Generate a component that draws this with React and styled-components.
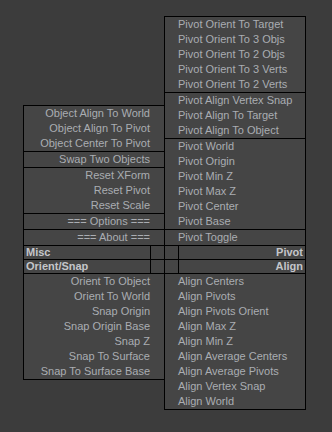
import React from 'react'
import styled, { createGlobalStyle } from 'styled-components'

const pivotOrient = ['Pivot Orient To Target', 'Pivot Orient To 3 Objs', 'Pivot Orient To 2 Objs', 'Pivot Orient To 3 Verts', 'Pivot Orient To 2 Verts']
const pivotAlign = ['Pivot Align Vertex Snap', 'Pivot Align To Target', 'Pivot Align To Object']
const pivotPlace = ['Pivot World', 'Pivot Origin', 'Pivot Min Z', 'Pivot Max Z', 'Pivot Center', 'Pivot Base']

const objectAlign = ['Object Align To World', 'Object Align To Pivot', 'Object Center To Pivot']
const resets = ['Reset XForm', 'Reset Pivot', 'Reset Scale']

const orientSnap = ['Orient To Object', 'Orient To World', 'Snap Origin', 'Snap Origin Base', 'Snap Z', 'Snap To Surface', 'Snap To Surface Base']
const aligns = ['Align Centers', 'Align Pivots', 'Align Pivots Orient', 'Align Max Z', 'Align Min Z', 'Align Average Centers', 'Align Average Pivots', 'Align Vertex Snap', 'Align World']

const GlobalStyle = createGlobalStyle`
    html, body {
        margin: 0;
        padding: 0;
        background: #3c3c3c;
    }
    body {
        font-family: "Liberation Sans", Arial, sans-serif;
        font-size: 11px;
    }
`

const Page = styled.div`
    width: 332px;
    height: 432px;
    padding: 16px 0 0 23px;
    box-sizing: border-box;
    display: flex;
    flex-direction: column;
`

const Columns = styled.div`
    display: flex;
    align-items: ${p => p.$align || 'flex-start'};
`

const Column = styled.div`
    width: 142px;
    display: flex;
    flex-direction: column;
    margin-left: ${p => p.$right ? '-1px' : '0'};
`

const Block = styled.div`
    border: 1px solid #000;
    background: #454545;
    margin-top: -1px;
    &:first-child {
        margin-top: 0;
    }
`

const Item = styled.div`
    height: 15px;
    line-height: 15px;
    color: #aaadb2;
    white-space: nowrap;
    text-align: ${p => p.$right ? 'right' : 'left'};
    padding: ${p => p.$right ? '0 14px 0 0' : '0 0 0 13px'};
`

const HeaderRow = styled.div`
    display: flex;
    margin-top: -1px;
    width: 283px;
`

const HeaderCell = styled.div`
    height: 13px;
    line-height: 13px;
    border: 1px solid #000;
    background: #454545;
    color: #c4c6ca;
    font-weight: bold;
    padding: 0 2px;
    flex: ${p => p.$grow ? 1 : 'none'};
    width: ${p => p.$grow ? 'auto' : '13px'};
    text-align: ${p => p.$right ? 'right' : 'left'};
    margin-left: -1px;
    box-sizing: content-box;
    &:first-child {
        margin-left: 0;
    }
`

const SmallCell = styled(HeaderCell)`
    padding: 0;
`

const List = ({ items, right }) => (
    <Block>
        {items.map(t => <Item key={t} $right={right}>{t}</Item>)}
    </Block>
)

const Header = ({ left, right }) => (
    <HeaderRow>
        <HeaderCell $grow>{left}</HeaderCell>
        <SmallCell />
        <SmallCell />
        <HeaderCell $grow $right>{right}</HeaderCell>
    </HeaderRow>
)

const App = () => {
    return (
        <Page>
            <GlobalStyle />
            <Columns $align="flex-end">
                <Column>
                    <List items={objectAlign} right />
                    <List items={['Swap Two Objects']} right />
                    <List items={resets} right />
                    <List items={['=== Options ===']} right />
                    <List items={['=== About ===']} right />
                </Column>
                <Column $right>
                    <List items={pivotOrient} />
                    <List items={pivotAlign} />
                    <List items={pivotPlace} />
                    <List items={['Pivot Toggle']} />
                </Column>
            </Columns>
            <Header left="Misc" right="Pivot" />
            <Header left="Orient/Snap" right="Align" />
            <Columns style={{ marginTop: -1 }}>
                <Column>
                    <List items={orientSnap} right />
                </Column>
                <Column $right>
                    <List items={aligns} />
                </Column>
            </Columns>
        </Page>
    )
}

export default App
